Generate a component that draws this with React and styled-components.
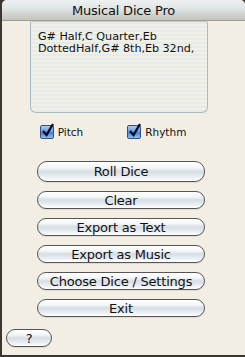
import styled, { createGlobalStyle } from "styled-components";

const GlobalStyle = createGlobalStyle`
  html, body {
    margin: 0;
    padding: 0;
    background: #3b3630;
  }
  body {
    width: 245px;
    height: 357px;
    overflow: hidden;
  }
`;

const Window = styled.div`
  margin-left: 2px;
  width: 243px;
  height: 355px;
  background: #f2eee3;
  border-radius: 5px 5px 0 0;
  display: flex;
  flex-direction: column;
  font-family: "DejaVu Sans", "Liberation Sans", sans-serif;
  color: #111;
  overflow: hidden;
`;

const TitleBar = styled.div`
  height: 20px;
  border-bottom: 1px solid #9b9a95;
  background: linear-gradient(#eef1f1 0%, #dfe4e5 45%, #cfd0cb 75%, #c6c5be 100%);
  display: flex;
  align-items: center;
  justify-content: center;
  font-size: 13px;
  color: #111;
  letter-spacing: -0.2px;
`;

const Content = styled.div`
  display: flex;
  flex-direction: column;
  align-items: center;
`;

const Output = styled.div`
  margin-left: -9px;
  border: 1px solid #a9bcc6;
  border-top-color: #c4ccd0;
  border-radius: 2px 2px 6px 6px;
  background: repeating-linear-gradient(
    #e2ecef 0px,
    #e2ecef 2px,
    #f3f1e6 2px,
    #f3f1e6 4px
  );
  padding: 9px 7px;
  box-sizing: border-box;
  font-size: 11.2px;
  line-height: 12px;
  height: 92px;
  width: 178px;
  letter-spacing: -0.05px;
`;

const CheckRow = styled.div`
  display: flex;
  gap: 44px;
  margin-top: 12px;
  margin-left: -21px;
`;

const CheckLabel = styled.label`
  display: flex;
  align-items: center;
  gap: 4px;
  font-size: 10.5px;
`;

const Box = styled.span`
  width: 12px;
  height: 12px;
  border: 1px solid #35507c;
  border-radius: 2px;
  background: linear-gradient(#a9cdf3 0%, #5d9ae2 50%, #3e82dc 55%, #8cc2f5 100%);
  position: relative;
  display: inline-block;
`;

const Tick = styled.svg`
  position: absolute;
  left: 1px;
  top: -3px;
`;

const Buttons = styled.div`
  display: flex;
  flex-direction: column;
  gap: 9px;
  margin-top: 22px;
  margin-left: -5px;
`;

const Pill = styled.button`
  width: ${(p) => p.$w || 168}px;
  height: ${(p) => (p.$big ? 21 : 18)}px;
  border: 1px solid #565656;
  border-radius: 10px;
  background: linear-gradient(
    #ffffff 0%,
    #f4f6f7 30%,
    #d6dee4 50%,
    #e3e9ed 70%,
    #ffffff 100%
  );
  font-family: "DejaVu Sans", "Liberation Sans", sans-serif;
  font-size: 13px;
  color: #111;
  padding: 0;
  display: flex;
  align-items: center;
  justify-content: center;
  box-shadow: inset 0 1px 0 #fff, 0 1px 0 rgba(0, 0, 0, 0.08);
  letter-spacing: -0.2px;
`;

const Footer = styled.div`
  display: flex;
  padding: 12px 0 0 4px;
`;

const Check = ({ label }) => (
  <CheckLabel>
    <Box>
      <Tick width="12" height="14" viewBox="0 0 12 14">
        <path d="M1 8 L4.5 12 L11 1" fill="none" stroke="#0b0b18" strokeWidth="2.3" />
      </Tick>
    </Box>
    {label}
  </CheckLabel>
);

export default function App() {
  return (
    <>
      <GlobalStyle />
      <Window>
        <TitleBar>Musical Dice Pro</TitleBar>
        <Content>
          <Output>
            G# Half,C Quarter,Eb
            <br />
            DottedHalf,G# 8th,Eb 32nd,
          </Output>
          <CheckRow>
            <Check label="Pitch" />
            <Check label="Rhythm" />
          </CheckRow>
          <Buttons>
            <Pill $big>Roll Dice</Pill>
            <Pill>Clear</Pill>
            <Pill>Export as Text</Pill>
            <Pill>Export as Music</Pill>
            <Pill>Choose Dice / Settings</Pill>
            <Pill>Exit</Pill>
          </Buttons>
        </Content>
        <Footer>
          <Pill $w={46}>?</Pill>
        </Footer>
      </Window>
    </>
  );
}
